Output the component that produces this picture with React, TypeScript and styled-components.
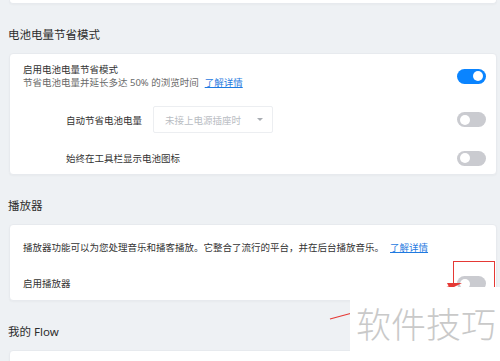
import React from "react";
import styled, { createGlobalStyle } from "styled-components";

const Global = createGlobalStyle`
  html, body { margin: 0; padding: 0; background: #eef1f4; }
  body { font-family: "Noto Sans", "Noto Sans CJK SC", sans-serif; color: #2b2b2b; }
`;

const Page = styled.div`
  position: relative;
  width: 500px;
  height: 361px;
  overflow: hidden;
  background: #eef1f4;
  padding: 0 3px 0 9px;
  box-sizing: border-box;
`;

const Card = styled.div<{ $stub?: boolean }>`
  background: #ffffff;
  border: 1px solid #e7eaee;
  border-radius: ${(p) => (p.$stub ? "0 0 4px 4px" : "4px")};
  box-shadow: 0 1px 2px rgba(0, 0, 0, 0.03);
  box-sizing: border-box;
  ${(p) => (p.$stub ? "height: 4px; border-top: none;" : "")}
`;

const SectionTitle = styled.div`
  font-size: 11.5px;
  line-height: 16px;
  height: 16px;
  margin: 23px 0 10px -1px;
  color: #2d2d2d;
`;

const BatteryCard = styled(Card)`
  padding: 9px 10px 3px 13px;
`;

const MainRow = styled.div`
  display: flex;
  align-items: center;
  justify-content: space-between;
`;

const TextBlock = styled.div`
  display: flex;
  flex-direction: column;
`;

const Title = styled.div`
  font-size: 9.5px;
  line-height: 13px;
  color: #333;
`;

const Sub = styled.div`
  font-size: 9.5px;
  line-height: 13px;
  color: #6a6a6a;
`;

const Link = styled.a`
  color: #1f7ae0;
  text-decoration: underline;
  margin-left: 6px;
  cursor: pointer;
`;

const SubRow = styled.div<{ $mt: number; $h: number }>`
  display: flex;
  align-items: center;
  margin-top: ${(p) => p.$mt}px;
  height: ${(p) => p.$h}px;
  padding-left: 43px;
`;

const SubLabel = styled.div`
  width: 87px;
  font-size: 9.5px;
  color: #333;
`;

const SubSpacer = styled.div`
  flex: 1;
`;

const Select = styled.div`
  width: 120px;
  height: 27px;
  box-sizing: border-box;
  border: 1px solid #eceef1;
  border-radius: 2px;
  display: flex;
  align-items: center;
  justify-content: space-between;
  padding: 0 9px 0 11px;
  font-size: 9.5px;
  color: #b9bdc3;
`;

const Caret = styled.span`
  width: 0;
  height: 0;
  border-left: 3.5px solid transparent;
  border-right: 3.5px solid transparent;
  border-top: 3.5px solid #a9adb3;
`;

const Toggle = styled.div<{ $on?: boolean }>`
  width: 29px;
  height: 15px;
  border-radius: 8px;
  background: ${(p) => (p.$on ? "#0a84ff" : "#cacbd0")};
  position: relative;
  flex: none;
  &::after {
    content: "";
    position: absolute;
    top: 2.5px;
    left: ${(p) => (p.$on ? "16px" : "3px")};
    width: 10px;
    height: 10px;
    border-radius: 50%;
    background: #fff;
  }
`;

const PlayerCard = styled(Card)`
  padding: 16px 10px 3px 13px;
`;

const EnableRow = styled.div`
  display: flex;
  align-items: center;
  justify-content: space-between;
  margin-top: 16px;
  height: 27px;
`;

const FlowCard = styled(Card)`
  padding: 11px 10px 10px 13px;
  height: 60px;
`;

const Annotation = styled.svg`
  position: absolute;
  left: 0;
  top: 0;
  width: 500px;
  height: 361px;
  pointer-events: none;
`;

const RedBox = styled.div`
  position: absolute;
  left: 453px;
  top: 261px;
  width: 42px;
  height: 40px;
  box-sizing: border-box;
  border: 1px solid #e53935;
`;

const Watermark = styled.div`
  position: absolute;
  left: 350px;
  top: 287px;
  right: 0;
  bottom: 0;
  background: #ffffff;
  display: flex;
  align-items: center;
  padding: 0 0 4px 6px;
  font-family: "Noto Sans CJK SC", sans-serif;
  font-size: 35px;
  font-weight: 300;
  letter-spacing: 0px;
  color: #c9c9c9;
`;

export default function App() {
  return (
    <>
      <Global />
      <Page>
        <Card $stub />
        <SectionTitle>电池电量节省模式</SectionTitle>
        <BatteryCard>
          <MainRow>
            <TextBlock>
              <Title>启用电池电量节省模式</Title>
              <Sub>
                节省电池电量并延长多达 50% 的浏览时间
                <Link>了解详情</Link>
              </Sub>
            </TextBlock>
            <Toggle $on />
          </MainRow>
          <SubRow $mt={17} $h={27}>
            <SubLabel>自动节省电池电量</SubLabel>
            <Select>
              <span>未接上电源插座时</span>
              <Caret />
            </Select>
            <SubSpacer />
            <Toggle />
          </SubRow>
          <SubRow $mt={12} $h={26}>
            <SubLabel style={{ width: "auto" }}>始终在工具栏显示电池图标</SubLabel>
            <SubSpacer />
            <Toggle />
          </SubRow>
        </BatteryCard>
        <SectionTitle>播放器</SectionTitle>
        <PlayerCard>
          <Sub style={{ color: "#333" }}>
            播放器功能可以为您处理音乐和播客播放。它整合了流行的平台，并在后台播放音乐。
            <Link>了解详情</Link>
          </Sub>
          <EnableRow>
            <Title>启用播放器</Title>
            <Toggle />
          </EnableRow>
        </PlayerCard>
        <SectionTitle>我的 Flow</SectionTitle>
        <FlowCard>
          <Title>我的 Flow 可作为您在手机和电脑之间发送文件、链接和笔记的私人空间。</Title>
        </FlowCard>
        <RedBox />
        <Annotation viewBox="0 0 500 361">
          <line x1="330" y1="319" x2="452" y2="286" stroke="#e53935" strokeWidth="1.2" />
          <polygon points="462,283 447,283 450,289" fill="#e53935" />
        </Annotation>
        <Watermark>软件技巧</Watermark>
      </Page>
    </>
  );
}
